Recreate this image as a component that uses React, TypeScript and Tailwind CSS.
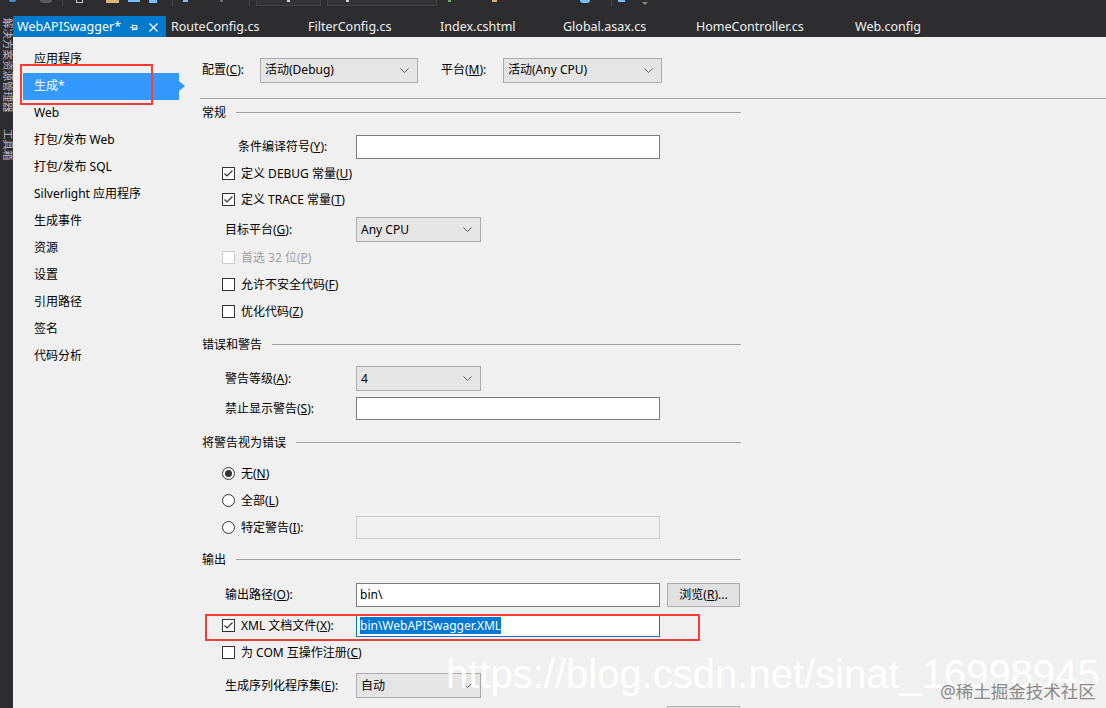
import React from 'react';

const FONT = "font-['Noto_Sans','Noto_Sans_CJK_SC',sans-serif]";

const Chevron = () => (
    <svg width="9" height="5" viewBox="0 0 9 5">
        <path d="M0.5 0.5 L4.5 4.5 L8.5 0.5" fill="none" stroke="#5a5a5a" strokeWidth="1" />
    </svg>
);

const Select: React.FC<{ value: string; className: string }> = ({ value, className }) => (
    <div className={`${className} h-[25px] bg-[#e5e5e5] border border-[#acacac] flex items-center justify-between pl-[4px] pr-[8px]`}>
        <span>{value}</span>
        <Chevron />
    </div>
);

const CheckBox: React.FC<{ checked?: boolean; disabled?: boolean }> = ({ checked, disabled }) => (
    <div className={`w-[13px] h-[13px] border bg-white flex items-center justify-center ${disabled ? 'border-[#cccccc]' : 'border-[#333333]'}`}>
        {checked && (
            <svg width="11" height="11" viewBox="0 0 11 11">
                <path d="M1.5 5.5 L4 8 L9.5 2.5" fill="none" stroke="#333333" strokeWidth="1.2" />
            </svg>
        )}
    </div>
);

const Radio: React.FC<{ checked?: boolean }> = ({ checked }) => (
    <div className="w-[13px] h-[13px] rounded-full border border-[#333333] bg-white flex items-center justify-center">
        {checked && <div className="w-[7px] h-[7px] rounded-full bg-[#333333]" />}
    </div>
);

const Section: React.FC<{ title: string; className: string }> = ({ title, className }) => (
    <div className={`flex items-center h-[24px] w-[541px] pl-[2px] ${className}`}>
        <span>{title}</span>
        <div className="flex-1 h-px bg-[#a0a0a0] ml-[10px]" />
    </div>
);

const Toolbar = () => (
    <div className="h-[16px] bg-[#2d2d30] flex items-start">
        <div className="ml-[9px] w-[7px] h-[2px] bg-[#3c8fdc] rounded-b" />
        <div className="ml-[24px] w-[12px] h-[3px] bg-[#5a5a5a] rounded-b-full" />
        <div className="ml-[10px] w-px h-[6px] bg-[#4a4a4e]" />
        <div className="ml-[13px] w-[7px] h-[3px] border-x border-b border-[#c8c8c8]" />
        <div className="ml-[23px] w-[13px] h-[3px] bg-[#dcb67a]" />
        <div className="ml-[9px] w-[12px] h-[2px] bg-[#75beff]" />
        <div className="ml-[9px] w-[8px] h-[3px] bg-[#75beff]" />
        <div className="ml-[15px] w-px h-[6px] bg-[#4a4a4e]" />
        <div className="ml-[10px] w-[5px] h-[2px] bg-[#75beff]" />
        <div className="ml-[32px] w-[3px] h-[2px] bg-[#6a6a6a]" />
        <div className="ml-[26px] w-px h-[6px] bg-[#4a4a4e]" />
        <div className="ml-[6px] w-[65px] h-[6px] border-x border-b border-[#434346] bg-[#333337] flex justify-center">
            <div className="w-[3px] h-[2px] bg-[#d0d0d0]" />
        </div>
        <div className="ml-[6px] w-[110px] h-[6px] border-x border-b border-[#434346] bg-[#333337] flex">
            <div className="ml-[18px] w-[3px] h-[2px] bg-[#d0d0d0]" />
        </div>
        <div className="ml-[11px] w-[3px] h-[2px] bg-[#5ab55a]" />
        <div className="ml-[41px] w-[5px] h-[2px] bg-[#e0b070]" />
        <div className="ml-[83px] w-[10px] h-[3px] bg-[#75beff] rounded-b-full" />
        <div className="ml-[21px] w-px h-[6px] bg-[#4a4a4e]" />
        <div className="ml-[6px] w-[7px] h-[2px] bg-[#75beff]" />
        <div className="ml-[17px] mt-[2px] w-0 h-0 border-x-[3px] border-x-transparent border-t-[3px] border-t-[#8a8a8a]" />
    </div>
);

const Tabs = () => (
    <div className="h-[24px] bg-[#2d2d30] flex text-[12.5px] text-[#f1f1f1]">
        <div className="w-[153px] bg-[#007acc] flex items-center pt-[2px] pl-[4px] pr-[8px] text-white">
            <span>WebAPISwagger*</span>
            <svg className="ml-auto" width="9" height="9" viewBox="0 0 9 9">
                <path d="M0 4.5 H2.5 M2.5 1.5 V7.5 M2.5 2.5 H7 V6.5 H2.5 M2.5 5 H7" fill="none" stroke="#ffffff" strokeWidth="1" />
            </svg>
            <svg className="ml-[10px]" width="9" height="9" viewBox="0 0 9 9">
                <path d="M0.5 0.5 L8.5 8.5 M8.5 0.5 L0.5 8.5" stroke="#ffffff" strokeWidth="1.2" />
            </svg>
        </div>
        <div className="w-[137px] pt-[2px] pl-[5px] flex items-center">RouteConfig.cs</div>
        <div className="w-[132px] pt-[2px] pl-[5px] flex items-center">FilterConfig.cs</div>
        <div className="w-[123px] pt-[2px] pl-[5px] flex items-center">Index.cshtml</div>
        <div className="w-[133px] pt-[2px] pl-[5px] flex items-center">Global.asax.cs</div>
        <div className="w-[159px] pt-[2px] pl-[5px] flex items-center">HomeController.cs</div>
        <div className="w-[100px] pt-[2px] pl-[5px] flex items-center">Web.config</div>
    </div>
);

const navItems = ['应用程序', '生成*', 'Web', '打包/发布 Web', '打包/发布 SQL', 'Silverlight 应用程序', '生成事件', '资源', '设置', '引用路径', '签名', '代码分析'];

const Sidebar = () => (
    <div className="w-[187px] pt-[9px] relative text-[12px] text-black">
        {navItems.map((item, i) => (
            <div key={item} className="h-[27px] flex items-center">
                <div className={`ml-[10px] w-[156px] h-full pl-[11px] flex items-center ${i === 1 ? 'bg-[#3399ff] text-white' : ''}`}>
                    {item}
                </div>
                {i === 1 && <div className="w-0 h-0 border-y-[5px] border-y-transparent border-l-[6px] border-l-[#3399ff]" />}
            </div>
        ))}
        <div className="absolute left-[7px] top-[27px] w-[133px] h-[41px] border-2 border-[#ff3838]" />
    </div>
);

const Panel = () => (
    <div className="flex-1 text-[12px] text-black">
        <div className="mt-[21px] h-[25px] flex items-center">
            <span className="ml-[2px] w-[58px]">配置(<u>C</u>):</span>
            <Select className="w-[158px]" value="活动(Debug)" />
            <span className="ml-[23px] w-[62px]">平台(<u>M</u>):</span>
            <Select className="w-[159px]" value="活动(Any CPU)" />
        </div>
        <div className="mt-[15px] h-px bg-[#a0a0a0]" />

        <Section className="mt-[2px]" title="常规" />
        <div className="mt-[10px] h-[24px] flex items-center pl-[38px]">
            <span className="w-[118px]">条件编译符号(<u>Y</u>):</span>
            <div className="w-[304px] h-[24px] bg-white border border-[#7a7a7a]" />
        </div>
        <div className="mt-[3px] h-[24px] flex items-center pl-[22px]">
            <CheckBox checked />
            <span className="ml-[6px]">定义 DEBUG 常量(<u>U</u>)</span>
        </div>
        <div className="mt-[2px] h-[24px] flex items-center pl-[22px]">
            <CheckBox checked />
            <span className="ml-[6px]">定义 TRACE 常量(<u>T</u>)</span>
        </div>
        <div className="mt-[6px] h-[24px] flex items-center pl-[25px]">
            <span className="w-[131px]">目标平台(<u>G</u>):</span>
            <Select className="w-[125px]" value="Any CPU" />
        </div>
        <div className="mt-[4px] h-[24px] flex items-center pl-[22px] text-[#a0a0a0]">
            <CheckBox disabled />
            <span className="ml-[6px]">首选 32 位(<u>P</u>)</span>
        </div>
        <div className="mt-[3px] h-[24px] flex items-center pl-[22px]">
            <CheckBox />
            <span className="ml-[6px]">允许不安全代码(<u>F</u>)</span>
        </div>
        <div className="mt-[3px] h-[24px] flex items-center pl-[22px]">
            <CheckBox />
            <span className="ml-[6px]">优化代码(<u>Z</u>)</span>
        </div>

        <Section className="mt-[9px]" title="错误和警告" />
        <div className="mt-[10px] h-[24px] flex items-center pl-[25px]">
            <span className="w-[131px]">警告等级(<u>A</u>):</span>
            <Select className="w-[125px]" value="4" />
        </div>
        <div className="mt-[6px] h-[24px] flex items-center pl-[25px]">
            <span className="w-[131px]">禁止显示警告(<u>S</u>):</span>
            <div className="w-[304px] h-[23px] bg-white border border-[#7a7a7a]" />
        </div>

        <Section className="mt-[10px]" title="将警告视为错误" />
        <div className="mt-[7px] h-[24px] flex items-center pl-[22px]">
            <Radio checked />
            <span className="ml-[6px]">无(<u>N</u>)</span>
        </div>
        <div className="mt-[3px] h-[24px] flex items-center pl-[22px]">
            <Radio />
            <span className="ml-[6px]">全部(<u>L</u>)</span>
        </div>
        <div className="mt-[3px] h-[24px] flex items-center pl-[22px]">
            <Radio />
            <span className="ml-[6px] w-[115px]">特定警告(<u>I</u>):</span>
            <div className="w-[304px] h-[23px] bg-[#f0f0f0] border border-[#cccccc]" />
        </div>

        <Section className="mt-[8px]" title="输出" />
        <div className="mt-[11px] h-[24px] flex items-center pl-[25px]">
            <span className="w-[131px]">输出路径(<u>O</u>):</span>
            <div className="w-[304px] h-[24px] bg-white border border-[#7a7a7a] flex items-center pl-[3px]">bin\</div>
            <div className="ml-[7px] w-[73px] h-[24px] bg-[#e1e1e1] border border-[#adadad] flex items-center justify-center">
                浏览(<u>R</u>)...
            </div>
        </div>
        <div className="mt-[7px] h-[24px] flex items-center pl-[22px] relative">
            <CheckBox checked />
            <span className="ml-[6px] w-[115px]">XML 文档文件(<u>X</u>):</span>
            <div className="w-[304px] h-[23px] bg-white border border-[#0078d7] flex items-center pl-[3px]">
                <span className="bg-[#0078d7] text-white leading-[17px]">bin\WebAPISwagger.XML</span>
            </div>
            <div className="absolute left-[5px] top-0 w-[495px] h-[27px] border-2 border-[#ff3838]" />
        </div>
        <div className="mt-[3px] h-[24px] flex items-center pl-[22px]">
            <CheckBox />
            <span className="ml-[6px]">为 COM 互操作注册(<u>C</u>)</span>
        </div>
        <div className="mt-[9px] h-[24px] flex items-center pl-[25px]">
            <span className="w-[131px]">生成序列化程序集(<u>E</u>):</span>
            <Select className="w-[125px]" value="自动" />
        </div>
        <div className="mt-[8px] ml-[467px] w-[73px] h-[24px] bg-[#e1e1e1] border border-[#adadad]" />
    </div>
);

export default function App() {
    return (
        <div className={`w-[1106px] h-[708px] overflow-hidden bg-[#f0f0f0] relative ${FONT}`}>
            <Toolbar />
            <div className="flex h-[692px]">
                <div className="w-[13px] bg-[#2d2d30] text-[#b8b8cc] text-[10.5px] leading-[10px] flex flex-col">
                    <div className="[writing-mode:vertical-rl] [text-orientation:sideways] mt-[2px]">解决方案资源管理器</div>
                    <div className="[writing-mode:vertical-rl] [text-orientation:sideways] mt-[16px]">工具箱</div>
                </div>
                <div className="flex-1 flex flex-col">
                    <Tabs />
                    <div className="h-[2px] bg-[#007acc]" />
                    <div className="flex flex-1">
                        <Sidebar />
                        <Panel />
                    </div>
                </div>
            </div>
            <div className="absolute left-[446px] top-[654px] font-['Liberation_Sans',sans-serif] text-[40px] leading-[40px] text-white/90 whitespace-nowrap">
                https://blog.csdn.net/sinat_16998945
            </div>
            <div className="absolute left-[940px] top-[680px] text-[17.5px] leading-[22px] text-[#8a8a8a] whitespace-nowrap">
                @稀土掘金技术社区
            </div>
        </div>
    );
}
